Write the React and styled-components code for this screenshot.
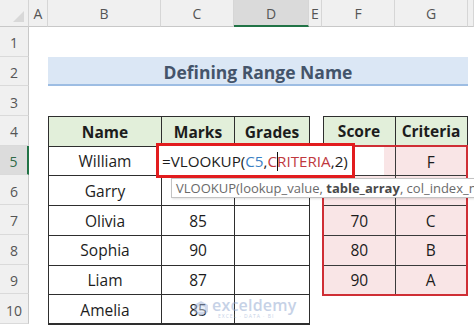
import React from 'react';
import styled, { createGlobalStyle } from 'styled-components';

const Global = createGlobalStyle`
  html, body { margin: 0; padding: 0; background: #fff; overflow: hidden; }
  body { font-family: "Open Sans", "Noto Sans", sans-serif; }
`;

const Sheet = styled.div`
  position: relative;
  width: 474px;
  height: 326px;
  overflow: hidden;
  display: grid;
  grid-template-columns: 29px 19px 113px 73px 75px 13px 73px 73px 6px;
  grid-template-rows: 27px repeat(10, 29.7px) 1fr;
  background: #fff;
`;

const Corner = styled.div`
  grid-row: 1;
  grid-column: 1;
  position: relative;
  background: #f0f0f0;
  border-right: 1px solid #d4d4d4;
  border-bottom: 1px solid #c8c8c8;
  &::after {
    content: '';
    position: absolute;
    right: 4px;
    bottom: 4px;
    width: 0;
    height: 0;
    border-left: 11px solid transparent;
    border-bottom: 11px solid #d8d8d8;
  }
`;

const ColHeader = styled.div`
  grid-row: 1;
  grid-column: ${p => p.$col};
  display: flex;
  align-items: center;
  justify-content: center;
  box-sizing: border-box;
  background: ${p => (p.$selected ? '#dadada' : '#f0f0f0')};
  border-right: 1px solid #d6d6d6;
  border-bottom: ${p => (p.$selected ? '2px solid #217346' : '1px solid #c8c8c8')};
  color: #555;
  font-size: 14px;
  padding-top: 1px;
`;

const RowHeader = styled.div`
  grid-column: 1;
  grid-row: ${p => p.$row};
  display: flex;
  align-items: center;
  justify-content: center;
  box-sizing: border-box;
  background: ${p => (p.$selected ? '#dcdcdc' : '#f0f0f0')};
  border-bottom: 1px solid #dadada;
  border-right: ${p => (p.$selected ? '2px solid #217346' : '1px solid #c8c8c8')};
  color: ${p => (p.$selected ? '#2f6b48' : '#555')};
  font-size: 14px;
  padding-top: 3px;
`;

const Title = styled.div`
  grid-row: 3;
  grid-column: 3 / 9;
  display: flex;
  align-items: center;
  justify-content: center;
  box-sizing: border-box;
  background: #dbe7f5;
  border-bottom: 2px solid #9dbde3;
  color: #44546a;
  font-weight: 700;
  font-size: 17.5px;
  padding-top: 2px;
`;

const TableArea = styled.div`
  grid-row: ${p => p.$rows};
  grid-column: ${p => p.$cols};
  display: flex;
  align-items: flex-start;
`;

const Table = styled.table`
  border-collapse: collapse;
  table-layout: fixed;
  width: 100%;
  font-size: 15.5px;
  color: #1c1c1c;
`;

const Row = styled.tr`
  height: 29.7px;
`;

const Cell = styled.td`
  text-align: center;
  vertical-align: middle;
  padding: 2px 0 0;
  border: 1.5px solid #2e2e2e;
  border-bottom-width: ${p => (p.$last ? '2.5px' : '1.5px')};
  line-height: 1;
  white-space: nowrap;
`;

const HeadCell = styled(Cell).attrs({ as: 'th' })`
  font-weight: 700;
  background: #e2efda;
`;

const PinkCell = styled.td`
  text-align: center;
  vertical-align: middle;
  padding: 2px 0 0;
  line-height: 1;
  background: ${p => (p.$blank ? 'linear-gradient(to right, #fff 60px, #f9e5e6 60px)' : '#f9e5e6')};
  border: 1.5px solid #3a3a3a;
  border-left: ${p => (p.$first ? '2px solid #cf2e35' : '1.5px solid #3a3a3a')};
  border-right: ${p => (p.$lastCol ? '2px solid #cf2e35' : '1.5px solid #3a3a3a')};
  border-top: ${p => (p.$top ? '2px solid #cf2e35' : '1.5px solid #3a3a3a')};
  border-bottom: ${p => (p.$bottom ? '2px solid #cf2e35' : '1.5px solid #3a3a3a')};
`;

const FormulaBox = styled.div`
  position: absolute;
  left: 156px;
  top: 143px;
  width: 199px;
  height: 35px;
  box-sizing: border-box;
  border: 3px solid #e21c1e;
  background: #fff;
  padding-left: 3px;
  padding-top: 5px;
  font-size: 15.2px;
  line-height: 20px;
  color: #1c1c1c;
  white-space: nowrap;
  z-index: 3;
`;

const Ref = styled.span`
  color: ${p => p.$color};
`;

const Caret = styled.span`
  display: inline-block;
  width: 0;
  height: 19px;
  border-left: 1px solid #111;
  vertical-align: -4px;
  margin-right: -1px;
`;

const Tooltip = styled.div`
  position: absolute;
  left: 171px;
  top: 178px;
  width: 340px;
  height: 20px;
  box-sizing: border-box;
  border: 1px solid #c3c3c3;
  background: #fff;
  box-shadow: 1px 1px 2px rgba(0, 0, 0, 0.12);
  display: flex;
  align-items: center;
  padding-left: 4px;
  font-size: 13px;
  color: #6a6a6a;
  white-space: nowrap;
  z-index: 2;
`;

const Bold = styled.b`
  color: #4a4a4a;
  font-weight: 700;
`;

const Watermark = styled.div`
  position: absolute;
  left: 193px;
  top: 297px;
  display: flex;
  align-items: center;
  gap: 3px;
  opacity: 0.5;
  z-index: 1;
  pointer-events: none;
`;

const WmText = styled.div`
  display: flex;
  flex-direction: column;
  line-height: 1;
`;

const WmName = styled.span`
  font-size: 16px;
  color: #8ea6cf;
  font-weight: 600;
  letter-spacing: 0.2px;
`;

const WmSub = styled.span`
  font-size: 5px;
  color: #8ea6cf;
  letter-spacing: 1px;
  margin-top: 1px;
  padding-left: 6px;
`;

const cols = ['A', 'B', 'C', 'D', 'E', 'F', 'G', ''];
const people = [
  ['William', ''],
  ['Garry', ''],
  ['Olivia', '85'],
  ['Sophia', '90'],
  ['Liam', '87'],
  ['Amelia', '85'],
];
const criteria = [
  ['', 'F'],
  ['', ''],
  ['70', 'C'],
  ['80', 'B'],
  ['90', 'A'],
];

export default function App() {
  return (
    <>
      <Global />
      <Sheet>
        <Corner />
        {cols.map((c, i) => (
          <ColHeader key={i} $col={i + 2} $selected={c === 'D'}>
            {c}
          </ColHeader>
        ))}
        {Array.from({ length: 10 }, (_, i) => (
          <RowHeader key={i} $row={i + 2} $selected={i + 1 === 5}>
            {i + 1}
          </RowHeader>
        ))}
        <Title>Defining Range Name</Title>

        <TableArea $rows="5 / 12" $cols="3 / 6">
          <Table>
            <colgroup>
              <col style={{ width: 113 }} />
              <col style={{ width: 73 }} />
              <col style={{ width: 75 }} />
            </colgroup>
            <thead>
              <Row>
                <HeadCell>Name</HeadCell>
                <HeadCell>Marks</HeadCell>
                <HeadCell>Grades</HeadCell>
              </Row>
            </thead>
            <tbody>
              {people.map(([n, m], i) => (
                <Row key={n}>
                  <Cell $last={i === people.length - 1}>{n}</Cell>
                  <Cell $last={i === people.length - 1}>{m}</Cell>
                  <Cell $last={i === people.length - 1} />
                </Row>
              ))}
            </tbody>
          </Table>
        </TableArea>

        <TableArea $rows="5 / 11" $cols="7 / 9">
          <Table>
            <thead>
              <Row>
                <HeadCell>Score</HeadCell>
                <HeadCell>Criteria</HeadCell>
              </Row>
            </thead>
            <tbody>
              {criteria.map(([s, g], i) => (
                <Row key={i}>
                  <PinkCell $first $blank={i === 0} $top={i === 0} $bottom={i === criteria.length - 1}>
                    {s}
                  </PinkCell>
                  <PinkCell $lastCol $top={i === 0} $bottom={i === criteria.length - 1}>
                    {g}
                  </PinkCell>
                </Row>
              ))}
            </tbody>
          </Table>
        </TableArea>

        <FormulaBox>
          =VLOOKUP(<Ref $color="#3b7fc4">C5</Ref>,<Ref $color="#c0393e">C<Caret />RITERIA</Ref>,2)
        </FormulaBox>
        <Tooltip>
          VLOOKUP(lookup_value,&nbsp;<Bold>table_array</Bold>, col_index_num, [range_lookup])
        </Tooltip>

        <Watermark>
          <svg width="16" height="17" viewBox="0 0 16 17">
            <path d="M8 1 L15 5 L15 12 L8 16 L1 12 L1 5 Z" fill="#9fb3d8" />
            <path d="M8 5 L12 7.5 L12 12 L4 12 L4 7.5 Z" fill="#d7e0f0" />
          </svg>
          <WmText>
            <WmName>exceldemy</WmName>
            <WmSub>EXCEL · DATA · BI</WmSub>
          </WmText>
        </Watermark>
      </Sheet>
    </>
  );
}
